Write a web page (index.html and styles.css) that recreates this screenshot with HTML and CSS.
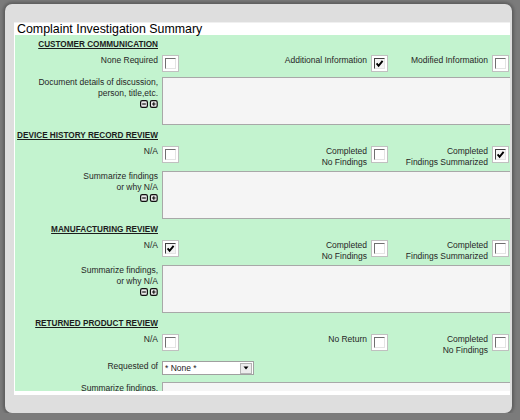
FILE: index.html
```html
<!DOCTYPE html>
<html>
<head>
<meta charset="utf-8">
<link rel="stylesheet" href="styles.css">
</head>
<body>
<div class="panel">
  <div class="content">
    <div class="view">
      <div class="title">Complaint Investigation Summary</div>
      <div class="form">

        <section class="sec">
          <div class="hdr"><span>CUSTOMER COMMUNICATION</span></div>
          <div class="row">
            <div class="lbl">None Required</div>
            <span class="cb"><span class="cbi"></span></span>
            <div class="lbl">Additional Information</div>
            <span class="cb"><span class="cbi on"><svg class="chk" viewBox="0 0 9 9"><path d="M1.6 4.4 L3.6 6.8 L7.6 1.8"/></svg></span></span>
            <div class="lbl">Modified Information</div>
            <span class="cb"><span class="cbi"></span></span>
          </div>
          <div class="trow">
            <div class="lbl">Document details of discussion,<br>person, title,etc.<br><svg class="pm" viewBox="0 0 18 8"><rect x="0.6" y="0.6" width="6.8" height="6.8" rx="1.6"/><path d="M2.2 4h3.6"/><rect x="10.4" y="0.6" width="6.8" height="6.8" rx="1.6"/><path d="M12 4h3.6M13.8 2.2v3.6"/></svg></div>
            <div class="ta"></div>
          </div>
        </section>

        <section class="sec">
          <div class="hdr"><span>DEVICE HISTORY RECORD REVIEW</span></div>
          <div class="row">
            <div class="lbl">N/A</div>
            <span class="cb"><span class="cbi"></span></span>
            <div class="lbl">Completed<br>No Findings</div>
            <span class="cb"><span class="cbi"></span></span>
            <div class="lbl">Completed<br>Findings Summarized</div>
            <span class="cb"><span class="cbi on"><svg class="chk" viewBox="0 0 9 9"><path d="M1.6 4.4 L3.6 6.8 L7.6 1.8"/></svg></span></span>
          </div>
          <div class="trow">
            <div class="lbl">Summarize findings<br>or why N/A<br><svg class="pm" viewBox="0 0 18 8"><rect x="0.6" y="0.6" width="6.8" height="6.8" rx="1.6"/><path d="M2.2 4h3.6"/><rect x="10.4" y="0.6" width="6.8" height="6.8" rx="1.6"/><path d="M12 4h3.6M13.8 2.2v3.6"/></svg></div>
            <div class="ta"></div>
          </div>
        </section>

        <section class="sec">
          <div class="hdr"><span>MANUFACTURING REVIEW</span></div>
          <div class="row">
            <div class="lbl">N/A</div>
            <span class="cb"><span class="cbi on"><svg class="chk" viewBox="0 0 9 9"><path d="M1.6 4.4 L3.6 6.8 L7.6 1.8"/></svg></span></span>
            <div class="lbl">Completed<br>No Findings</div>
            <span class="cb"><span class="cbi"></span></span>
            <div class="lbl">Completed<br>Findings Summarized</div>
            <span class="cb"><span class="cbi"></span></span>
          </div>
          <div class="trow">
            <div class="lbl">Summarize findings,<br>or why N/A<br><svg class="pm" viewBox="0 0 18 8"><rect x="0.6" y="0.6" width="6.8" height="6.8" rx="1.6"/><path d="M2.2 4h3.6"/><rect x="10.4" y="0.6" width="6.8" height="6.8" rx="1.6"/><path d="M12 4h3.6M13.8 2.2v3.6"/></svg></div>
            <div class="ta"></div>
          </div>
        </section>

        <section class="sec">
          <div class="hdr"><span>RETURNED PRODUCT REVIEW</span></div>
          <div class="row">
            <div class="lbl">N/A</div>
            <span class="cb"><span class="cbi"></span></span>
            <div class="lbl">No Return</div>
            <span class="cb"><span class="cbi"></span></span>
            <div class="lbl">Completed<br>No Findings</div>
            <span class="cb"><span class="cbi"></span></span>
          </div>
          <div class="srow">
            <div class="lbl">Requested of</div>
            <div class="sel"><span class="selv">* None *</span><span class="selb"><svg class="tri" viewBox="0 0 6 4"><path d="M0.5 0.5h5l-2.5 3z"/></svg></span></div>
          </div>
          <div class="trow last">
            <div class="lbl">Summarize findings,<br>or why N/A</div>
            <div class="ta"></div>
          </div>
        </section>

      </div>
    </div>
  </div>
</div>
</body>
</html>
```
FILE: styles.css
```css
* { box-sizing: border-box; }

body {
  margin: 0;
  background: #7b7b7b;
  font-family: "Liberation Sans", Arial, sans-serif;
}

.panel {
  margin: 4px 0 0 5px;
  width: 507px;
  height: 409px;
  padding: 18px 2px 0 9px;
  background: #dedede;
  border-radius: 7px;
  box-shadow: 0 0 3px 2px rgba(70, 70, 70, 0.55);
}

.content {
  width: 496px;
  height: 373px;
  background: #fff;
  padding: 0 0 4px 1px;
  border-top: 1px solid #f0f0f0;
}

.view {
  height: 368px;
  overflow: hidden;
}

.title {
  height: 12px;
  line-height: 12px;
  font-size: 12.4px;
  color: #000;
  padding-left: 2px;
  background: #fff;
  white-space: nowrap;
}

.form {
  background: #c3f3cf;
  padding-top: 4px;
  padding-bottom: 20px;
}

.sec + .sec .hdr { margin-top: 5px; }

.hdr {
  width: 143px;
  text-align: right;
  font-weight: bold;
  font-size: 8.2px;
  line-height: 12px;
  color: #1c1c1c;
  white-space: nowrap;
}

.hdr span { text-decoration: underline; }

.row {
  display: grid;
  grid-template-columns: 143px 17px 184px 17px 96px 17px;
  column-gap: 4px;
  align-items: start;
  padding: 4px 0 3px;
}

.lbl {
  text-align: right;
  font-size: 8.5px;
  line-height: 11px;
  color: #262626;
  white-space: nowrap;
}

.cb {
  display: block;
  width: 17px;
  height: 17px;
  margin-bottom: 2px;
  border: 1px solid #c0c0c0;
  background: #fff;
  padding: 2px;
}

.cbi {
  display: block;
  width: 11px;
  height: 11px;
  border-top: 1px solid #707070;
  border-left: 1px solid #707070;
  border-right: 1px solid #e4e4e4;
  border-bottom: 1px solid #e4e4e4;
}

.cbi.on {
  border-top-color: #404040;
  border-left-color: #404040;
  background: #f4f4f4;
}

.chk {
  display: block;
  width: 9px;
  height: 9px;
}

.chk path {
  fill: none;
  stroke: #000;
  stroke-width: 1.9;
}

.trow {
  display: grid;
  grid-template-columns: 143px 360px;
  column-gap: 4px;
  align-items: start;
}

.ta {
  height: 48px;
  background: #f5f5f5;
  border: 1px solid #a8a8a8;
}

.pm {
  display: inline-block;
  width: 18px;
  height: 8px;
  margin-top: 1px;
  vertical-align: top;
}

.pm rect { fill: #e8e8e8; stroke: #111; stroke-width: 1.2; }
.pm path { fill: none; stroke: #111; stroke-width: 1.2; }

.srow {
  display: grid;
  grid-template-columns: 143px 92px;
  column-gap: 4px;
  align-items: start;
  margin-top: 2px;
}

.sel {
  height: 14px;
  border: 1px solid #a0a0a0;
  background: #fff;
  display: flex;
  align-items: center;
  justify-content: space-between;
  padding: 0 1px 0 2px;
}

.selv {
  font-size: 8.5px;
  color: #222;
  line-height: 11px;
}

.selb {
  width: 12px;
  height: 11px;
  background: #ececec;
  border: 1px solid #b4b4b4;
  display: flex;
  align-items: center;
  justify-content: center;
}

.tri { width: 6px; height: 4px; display: block; }
.tri path { fill: #000; }

.trow.last { margin-top: 7px; }
.trow.last .lbl { padding-top: 1px; }
```
